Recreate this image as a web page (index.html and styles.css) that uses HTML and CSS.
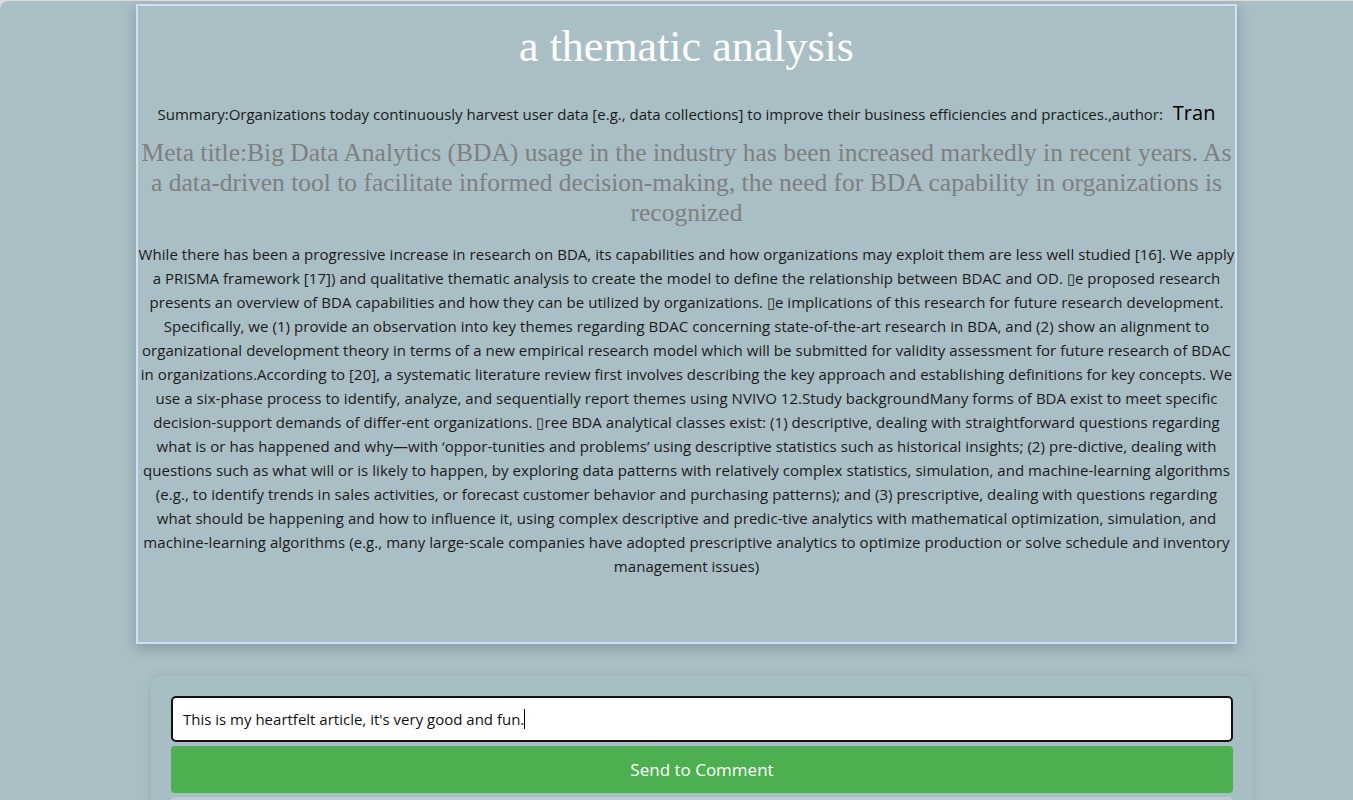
FILE: index.html
```html
<!DOCTYPE html>
<html>
<head>
<meta charset="utf-8">
<link rel="stylesheet" href="styles.css">
</head>
<body>
<div class="page">
  <article class="article">
    <h1 class="title">a thematic analysis</h1>
    <p class="summary">Summary:Organizations today continuously harvest user data [e.g., data collections] to improve their business efficiencies and practices.,author: <span class="author">Tran</span></p>
    <h2 class="meta">Meta title:Big Data Analytics (BDA) usage in the industry has been increased markedly in recent years. As a data-driven tool to facilitate informed decision-making, the need for BDA capability in organizations is recognized</h2>
    <p class="body">While there has been a progressive increase in research on BDA, its capabilities and how organizations may exploit them are less well studied [16]. We apply a PRISMA framework [17]) and qualitative thematic analysis to create the model to define the relationship between BDAC and OD. &#x25AF;e proposed research presents an overview of BDA capabilities and how they can be utilized by organizations. &#x25AF;e implications of this research for future research development. Specifically, we (1) provide an observation into key themes regarding BDAC concerning state-of-the-art research in BDA, and (2) show an alignment to organizational development theory in terms of a new empirical research model which will be submitted for validity assessment for future research of BDAC in organizations.According to [20], a systematic literature review first involves describing the key approach and establishing definitions for key concepts. We use a six-phase process to identify, analyze, and sequentially report themes using NVIVO 12.Study backgroundMany forms of BDA exist to meet specific decision-support demands of differ-ent organizations. &#x25AF;ree BDA analytical classes exist: (1) descriptive, dealing with straightforward questions regarding what is or has happened and why—with ‘oppor-tunities and problems’ using descriptive statistics such as historical insights; (2) pre-dictive, dealing with questions such as what will or is likely to happen, by exploring data patterns with relatively complex statistics, simulation, and machine-learning algorithms (e.g., to identify trends in sales activities, or forecast customer behavior and purchasing patterns); and (3) prescriptive, dealing with questions regarding what should be happening and how to influence it, using complex descriptive and predic-tive analytics with mathematical optimization, simulation, and machine-learning algorithms (e.g., many large-scale companies have adopted prescriptive analytics to optimize production or solve schedule and inventory management issues)</p>
  </article>
  <section class="comments">
    <div class="input">This is my heartfelt article, it's very good and fun.<span class="caret"></span></div>
    <button class="send">Send to Comment</button>
    <div class="next"></div>
  </section>
</div>
</body>
</html>
```
FILE: styles.css
```css
html { background: #dcdcdc; }
body { margin: 0; }
.page {
  margin-top: 1px;
  min-height: 799px;
  background: #a9bfc5;
  border-top-left-radius: 8px;
  padding-top: 3px;
  font-family: "Open Sans", "Noto Sans", sans-serif;
  overflow: hidden;
}
.article {
  margin-left: 136px;
  width: 1097px;
  height: 636px;
  border: 2px solid #cfdff5;
  box-shadow: 0 4px 12px rgba(60, 80, 90, 0.35);
  text-align: center;
}
.title {
  margin: 16px 0 0;
  font-family: "Liberation Serif", serif;
  font-weight: normal;
  font-size: 44px;
  line-height: 50px;
  color: #ffffff;
}
.summary {
  margin: 29px 0 0;
  font-size: 15px;
  line-height: 24px;
  color: #1a1a1a;
}
.author {
  font-size: 20px;
  line-height: 24px;
  color: #000;
  margin-left: 6px;
}
.meta {
  margin: 12px 0 0;
  font-family: "Liberation Serif", serif;
  font-weight: normal;
  font-size: 25.5px;
  line-height: 30px;
  color: #7d7f80;
}
.body {
  margin: 14px 0 0;
  font-size: 15px;
  line-height: 24px;
  letter-spacing: 0.05px;
  color: #1a1a1a;
}
.comments {
  margin: 32px 0 0 151px;
  width: 1062px;
  padding: 20px;
  background: #a7bec4;
  border-radius: 10px;
  box-shadow: 0 0 10px rgba(80, 100, 110, 0.18);
  display: flex;
  flex-direction: column;
  gap: 4px;
}
.input {
  height: 42px;
  border: 2px solid #111;
  border-radius: 5px;
  background: #fff;
  padding: 0 10px;
  display: flex;
  align-items: center;
  font-size: 15px;
  color: #111;
}
.caret {
  display: inline-block;
  width: 1px;
  height: 20px;
  background: #000;
}
.send {
  height: 47px;
  border: none;
  border-radius: 4px;
  background: #4caf50;
  color: #fff;
  font-family: "Open Sans", "Noto Sans", sans-serif;
  font-size: 17px;
}
.next {
  height: 40px;
  background: #b9cbd0;
  border-radius: 4px;
}
```
